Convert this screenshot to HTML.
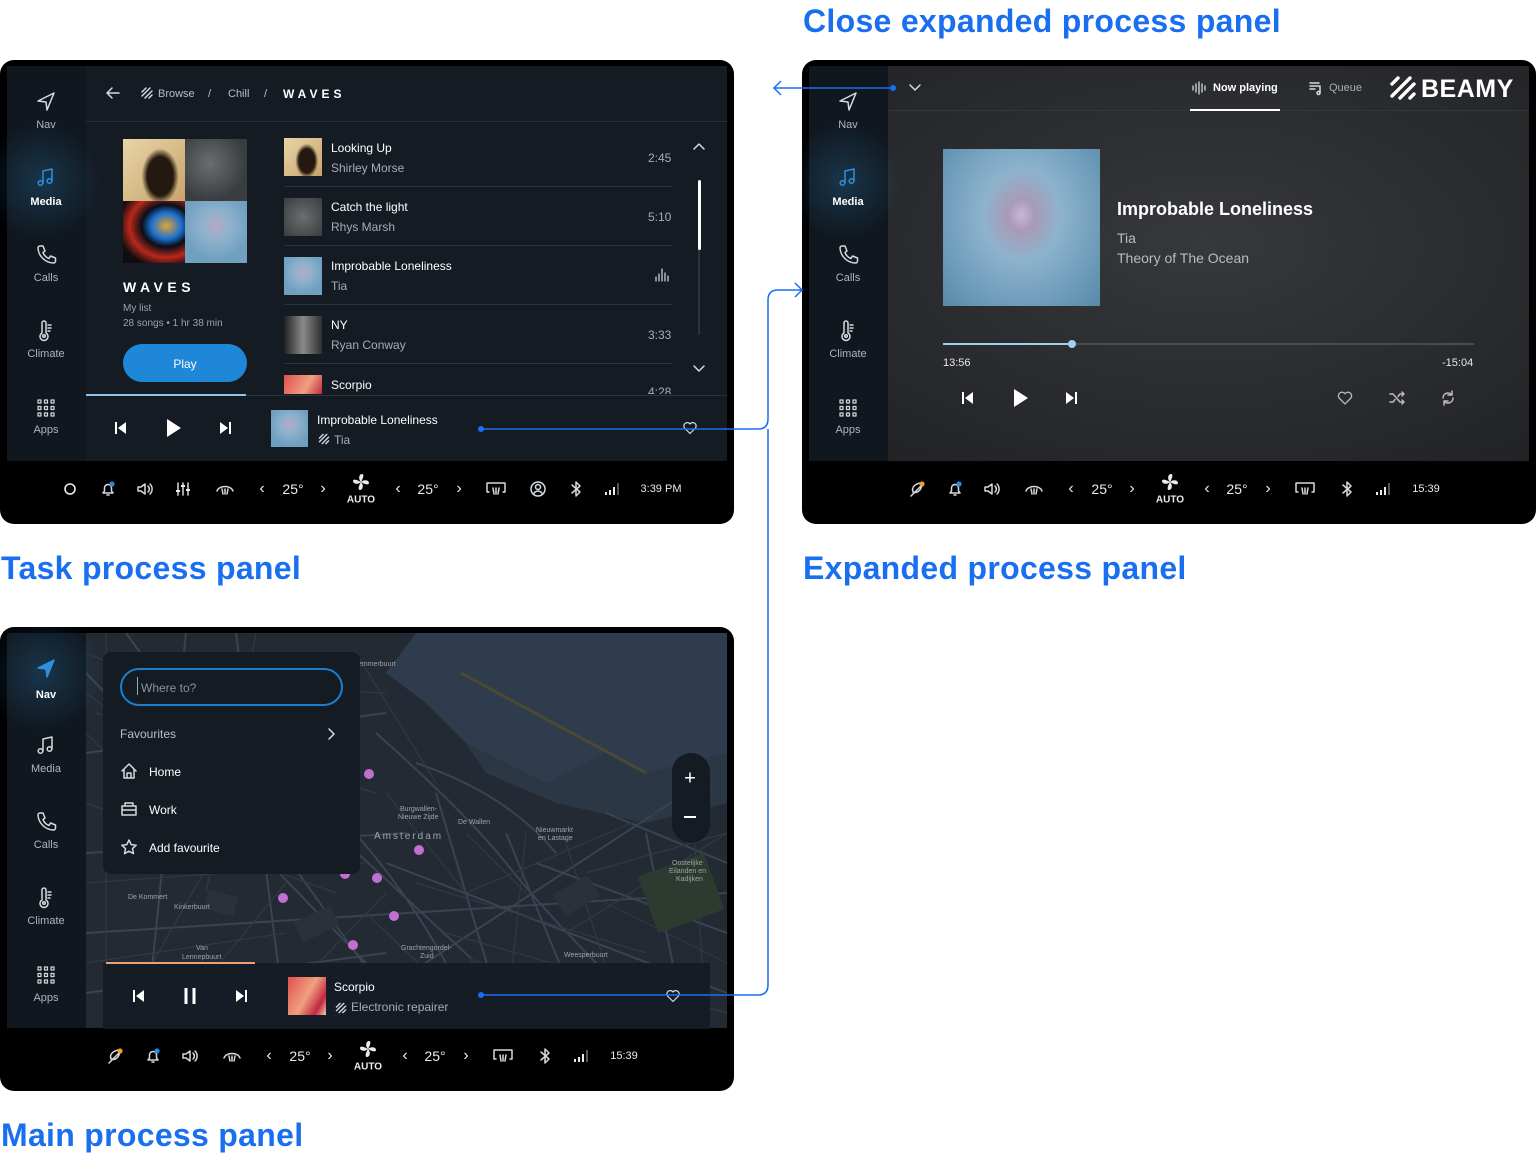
<!DOCTYPE html>
<html><head><meta charset="utf-8">
<style>
*{margin:0;padding:0;box-sizing:border-box}
body{width:1536px;height:1158px;background:#fff;position:relative;overflow:hidden;font-family:"Liberation Sans",sans-serif}
.a{position:absolute}
.c{position:absolute;transform:translate(-50%,-50%);white-space:nowrap}
.t{position:absolute;white-space:nowrap;margin-top:1px}
.title{position:absolute;color:#1a6ff0;font-weight:bold;font-size:32px;white-space:nowrap;letter-spacing:0.3px}
.p{position:absolute;width:734px;height:464px;background:#000;border-radius:14px;overflow:hidden}
.sb{position:absolute;left:7px;top:6px;width:79px;height:395px;background:#10171e}
.lab{position:absolute;left:46px;transform:translate(-50%,-50%);font-size:11px;color:#aeb5bd;white-space:nowrap;margin-top:1px}
.act{color:#fff;font-weight:bold}
.glow{position:absolute;left:-30px;width:130px;height:130px;border-radius:50%;background:radial-gradient(circle,rgba(40,110,160,.35),rgba(40,110,160,0) 65%)}
svg{overflow:visible}
.s{fill:none;stroke:#d5dade;stroke-width:1.5;stroke-linecap:round;stroke-linejoin:round}
.bb{color:#e8ecef;font-size:14px}
</style></head><body>

<div class="title" style="left:803px;top:3px">Close expanded process panel</div>
<div class="title" style="left:1px;top:550px">Task process panel</div>
<div class="title" style="left:803px;top:550px">Expanded process panel</div>
<div class="title" style="left:1px;top:1117px">Main process panel</div>

<!-- ================= PANEL 1 ================= -->
<div class="p" style="left:0;top:60px">
 <div class="a" style="left:7px;top:6px;width:720px;height:395px;background:#141b23"></div>
 <div class="sb">
  <div class="glow" style="top:50px"></div>
 </div>
 <svg class="c" style="left:46px;top:42px" width="22" height="22" viewBox="0 0 22 22"><path class="s" d="M19 2 L3 10 L11 11 L12 19 Z"/></svg>
 <div class="lab" style="top:64px">Nav</div>
 <svg class="c" style="left:46px;top:117px" width="22" height="22" viewBox="0 0 22 22"><path class="s" style="stroke:#2e8fe0" d="M8 17V5l9-2v12"/><circle class="s" style="stroke:#2e8fe0" cx="5.5" cy="17" r="2.3"/><circle class="s" style="stroke:#2e8fe0" cx="14.5" cy="15" r="2.3"/></svg>
 <div class="lab act" style="top:141px">Media</div>
 <svg class="c" style="left:46px;top:195px" width="22" height="22" viewBox="0 0 22 22"><path class="s" d="M5 2h3l2 5-2 1.5a10 10 0 0 0 6 6L15.5 12l5 2v3a2 2 0 0 1-2 2A16 16 0 0 1 3 4a2 2 0 0 1 2-2z"/></svg>
 <div class="lab" style="top:217px">Calls</div>
 <svg class="c" style="left:46px;top:271px" width="22" height="22" viewBox="0 0 22 22"><path class="s" d="M7 3a2 2 0 0 1 4 0v10a4 4 0 1 1-4 0z M13 5h3 M13 8h3 M13 11h2"/><circle class="s" cx="9" cy="16" r="1.3"/></svg>
 <div class="lab" style="top:293px">Climate</div>
 <svg class="c" style="left:46px;top:348px" width="18" height="18" viewBox="0 0 18 18"><g class="s" style="stroke-width:1.2"><rect x="1" y="1" width="3" height="3"/><rect x="7.5" y="1" width="3" height="3"/><rect x="14" y="1" width="3" height="3"/><rect x="1" y="7.5" width="3" height="3"/><rect x="7.5" y="7.5" width="3" height="3"/><rect x="14" y="7.5" width="3" height="3"/><rect x="1" y="14" width="3" height="3"/><rect x="7.5" y="14" width="3" height="3"/><rect x="14" y="14" width="3" height="3"/></g></svg>
 <div class="lab" style="top:369px">Apps</div>

 <svg class="c" style="left:113px;top:33px" width="14" height="12" viewBox="0 0 14 12"><path class="s" d="M13 6H1M6 1L1 6l5 5"/></svg>
 <svg class="c" style="left:147px;top:33px" width="12" height="12" viewBox="0 0 12 12"><path class="s" d="M5 1L1 5M9 1L1 9M11 4L4 11M11 8L8 11"/></svg>
 <div class="t" style="left:158px;top:27px;font-size:11px;color:#b8bfc6">Browse</div>
 <div class="t" style="left:208px;top:27px;font-size:11px;color:#b8bfc6">/</div>
 <div class="t" style="left:228px;top:27px;font-size:11px;color:#b8bfc6">Chill</div>
 <div class="t" style="left:264px;top:27px;font-size:11px;color:#b8bfc6">/</div>
 <div class="t" style="left:283px;top:26px;font-size:12px;color:#fff;font-weight:bold;letter-spacing:4px">WAVES</div>
 <div class="a" style="left:86px;top:61px;width:641px;height:1px;background:#26303a"></div>

 <div class="a" style="left:123px;top:79px;width:62px;height:62px;background:radial-gradient(ellipse 30% 45% at 60% 60%,#241810 0,#241810 70%,transparent 100%),linear-gradient(135deg,#e8d4a8,#c8a46c)"></div>
 <div class="a" style="left:185px;top:79px;width:62px;height:62px;background:radial-gradient(circle at 40% 40%,#6a6e70,#3a3d40 70%)"></div>
 <div class="a" style="left:123px;top:141px;width:62px;height:62px;background:radial-gradient(ellipse at 70% 40%,#e3a530 0,#1a6fd0 25%,#0a0e16 40%,#b8281c 60%,#100c10 80%)"></div>
 <div class="a" style="left:185px;top:141px;width:62px;height:62px;background:radial-gradient(circle at 50% 40%,#b8a8c8 0,#8eb2cc 30%,#6fa0c0 70%)"></div>
 <div class="t" style="left:123px;top:218px;font-size:14px;color:#fff;font-weight:bold;letter-spacing:4.5px">WAVES</div>
 <div class="t" style="left:123px;top:242px;font-size:10px;color:#9aa2aa">My list</div>
 <div class="t" style="left:123px;top:257px;font-size:10px;color:#9aa2aa">28 songs • 1 hr 38 min</div>
 <div class="a" style="left:123px;top:284px;width:124px;height:38px;border-radius:19px;background:#1e87d8"></div>
 <div class="c" style="left:185px;top:304px;font-size:12px;color:#fff">Play</div>

 <div class="a" style="left:284px;top:78px;width:38px;height:38px;background:radial-gradient(ellipse 30% 45% at 60% 60%,#241810 0,#241810 70%,transparent 100%),linear-gradient(135deg,#e8d4a8,#c8a46c)"></div>
 <div class="t" style="left:331px;top:80px;font-size:12px;color:#fff">Looking Up</div>
 <div class="t" style="left:331px;top:100px;font-size:12px;color:#a6adb4">Shirley Morse</div>
 <div class="t" style="left:648px;top:90px;font-size:12px;color:#a6adb4">2:45</div>
 <div class="a" style="left:284px;top:126px;width:388px;height:1px;background:#2a333d"></div>
 <div class="a" style="left:284px;top:138px;width:38px;height:38px;background:radial-gradient(circle,#6a6e70,#3a3d40)"></div>
 <div class="t" style="left:331px;top:139px;font-size:12px;color:#fff">Catch the light</div>
 <div class="t" style="left:331px;top:159px;font-size:12px;color:#a6adb4">Rhys Marsh</div>
 <div class="t" style="left:648px;top:149px;font-size:12px;color:#a6adb4">5:10</div>
 <div class="a" style="left:284px;top:185px;width:388px;height:1px;background:#2a333d"></div>
 <div class="a" style="left:284px;top:197px;width:38px;height:38px;background:radial-gradient(circle at 50% 40%,#b8a8c8 0,#8eb2cc 30%,#6fa0c0 70%)"></div>
 <div class="t" style="left:331px;top:198px;font-size:12px;color:#fff">Improbable Loneliness</div>
 <div class="t" style="left:331px;top:218px;font-size:12px;color:#a6adb4">Tia</div>
 <svg class="c" style="left:662px;top:215px" width="14" height="14" viewBox="0 0 14 14"><path class="s" style="stroke-width:1.2" d="M1 13V9M4 13V6M7 13V1M10 13V5M13 13V8"/></svg>
 <div class="a" style="left:284px;top:244px;width:388px;height:1px;background:#2a333d"></div>
 <div class="a" style="left:284px;top:256px;width:38px;height:38px;background:linear-gradient(90deg,#202020,#8a8a8a 50%,#303030)"></div>
 <div class="t" style="left:331px;top:257px;font-size:12px;color:#fff">NY</div>
 <div class="t" style="left:331px;top:277px;font-size:12px;color:#a6adb4">Ryan Conway</div>
 <div class="t" style="left:648px;top:267px;font-size:12px;color:#a6adb4">3:33</div>
 <div class="a" style="left:284px;top:303px;width:388px;height:1px;background:#2a333d"></div>
 <div class="a" style="left:284px;top:315px;width:38px;height:19px;background:linear-gradient(120deg,#e05050,#f0a080 60%,#c02840)"></div>
 <div class="t" style="left:331px;top:317px;font-size:12px;color:#fff">Scorpio</div>
 <div class="a" style="left:640px;top:323px;width:40px;height:11px;overflow:hidden"><div class="t" style="left:8px;top:2px;font-size:12px;color:#a6adb4;margin:0">4:28</div></div>
 <svg class="c" style="left:699px;top:86px" width="12" height="8" viewBox="0 0 12 8"><path class="s" d="M1 7l5-5 5 5"/></svg>
 <svg class="c" style="left:699px;top:309px" width="12" height="8" viewBox="0 0 12 8"><path class="s" d="M1 1l5 5 5-5"/></svg>
 <div class="a" style="left:698px;top:180px;width:2px;height:95px;background:#2a333d"></div>
 <div class="a" style="left:698px;top:120px;width:3px;height:70px;background:#fff;border-radius:2px"></div>

 <div class="a" style="left:86px;top:335px;width:641px;height:66px;background:#141b23;border-top:1px solid #2a333d"></div>
 <div class="a" style="left:86px;top:334px;width:160px;height:2px;background:#8cc4ee"></div>
 <svg class="c" style="left:121px;top:368px" width="12" height="14" viewBox="0 0 12 14"><path d="M1 1v12" stroke="#fff" stroke-width="2"/><path d="M11 1L3 7l8 6z" fill="#fff"/></svg>
 <svg class="c" style="left:174px;top:368px" width="16" height="20" viewBox="0 0 16 20"><path d="M1 1l14 9-14 9z" fill="#fff"/></svg>
 <svg class="c" style="left:225px;top:368px" width="12" height="14" viewBox="0 0 12 14"><path d="M11 1v12" stroke="#fff" stroke-width="2"/><path d="M1 1l8 6-8 6z" fill="#fff"/></svg>
 <div class="a" style="left:271px;top:350px;width:37px;height:37px;background:radial-gradient(circle at 50% 40%,#b8a8c8 0,#8eb2cc 30%,#6fa0c0 70%)"></div>
 <div class="t" style="left:317px;top:352px;font-size:12px;color:#fff">Improbable Loneliness</div>
 <svg class="c" style="left:324px;top:379px" width="11" height="11" viewBox="0 0 12 12"><path class="s" d="M5 1L1 5M9 1L1 9M11 4L4 11M11 8L8 11"/></svg>
 <div class="t" style="left:334px;top:372px;font-size:12px;color:#a6adb4">Tia</div>
 <svg class="c" style="left:690px;top:368px" width="14" height="13" viewBox="0 0 14 13"><path class="s" style="stroke-width:1.2" d="M7 12L1.5 6.5A3 3 0 0 1 7 2.5a3 3 0 0 1 5.5 4z"/></svg>

 <div class="bb">
  <svg class="c" style="left:70px;top:429px" width="12" height="12"><circle cx="6" cy="6" r="5" fill="none" stroke="#e8ecef" stroke-width="1.6"/></svg>
  <svg class="c" style="left:108px;top:429px" width="16" height="16" viewBox="0 0 16 16"><path class="s" d="M3 12h10l-1.5-2V7a3.5 3.5 0 0 0-7 0v3zM7 14h2"/><circle cx="12" cy="3" r="2.6" fill="#2a8ae0"/></svg>
  <svg class="c" style="left:145px;top:429px" width="16" height="14" viewBox="0 0 16 14"><path class="s" d="M1 5h3l4-3v10l-4-3H1zM11 4a4 4 0 0 1 0 6M13 2a7 7 0 0 1 0 10"/></svg>
  <svg class="c" style="left:183px;top:429px" width="14" height="14" viewBox="0 0 14 14"><path class="s" d="M2 1v12M7 1v12M12 1v12"/><path d="M0 9h4M5 4h4M10 8h4" stroke="#e8ecef" stroke-width="2"/></svg>
  <svg class="c" style="left:225px;top:429px" width="20" height="14" viewBox="0 0 20 14"><path class="s" d="M2 9C4 3 16 3 18 9M7 7l1 5M10 7v5M13 7l-1 5"/></svg>
  <div class="c" style="left:262px;top:429px;font-size:16px">‹</div>
  <div class="c" style="left:293px;top:429px">25°</div>
  <div class="c" style="left:323px;top:429px;font-size:16px">›</div>
  <svg class="c" style="left:361px;top:422px" width="18" height="18" viewBox="0 0 18 18"><path d="M9 9C6 6 7 1 10 1c2 0 2 3 -1 8zM9 9c3-3 8-2 8 1 0 2-3 2-8-1zM9 9c3 3 2 8-1 8-2 0-2-3 1-8zM9 9C6 12 1 11 1 8c0-2 3-2 8 1z" fill="#e8ecef"/></svg>
  <div class="c" style="left:361px;top:440px;font-size:10px;font-weight:bold">AUTO</div>
  <div class="c" style="left:398px;top:429px;font-size:16px">‹</div>
  <div class="c" style="left:428px;top:429px">25°</div>
  <div class="c" style="left:459px;top:429px;font-size:16px">›</div>
  <svg class="c" style="left:496px;top:429px" width="20" height="14" viewBox="0 0 20 14"><path class="s" d="M3 10H1V1h18v9h-2M7 6l1 6M10 6v6M13 6l-1 6"/></svg>
  <svg class="c" style="left:538px;top:429px" width="16" height="16" viewBox="0 0 16 16"><circle class="s" cx="8" cy="8" r="7"/><circle class="s" cx="8" cy="6" r="2.5"/><path class="s" d="M3.5 13a5 5 0 0 1 9 0"/></svg>
  <svg class="c" style="left:576px;top:429px" width="10" height="16" viewBox="0 0 10 16"><path class="s" d="M1 4l8 7-4 4V1l4 4-8 7"/></svg>
  <svg class="c" style="left:612px;top:429px" width="16" height="14" viewBox="0 0 16 14"><path d="M2 13v-3M6 13V8M10 13V5" stroke="#e8ecef" stroke-width="2"/><path d="M14 13V1" stroke="#555" stroke-width="2"/></svg>
  <div class="c" style="left:661px;top:429px;font-size:11px">3:39 PM</div>
 </div>
</div>

<!-- ================= PANEL 2 ================= -->
<div class="p" style="left:802px;top:60px">
 <div class="a" style="left:7px;top:6px;width:720px;height:395px;background:radial-gradient(ellipse at 55% 45%,#36383b 0,#2a2c2f 50%,#1f2124 100%)"></div>
 <div class="sb"><div class="glow" style="top:50px"></div></div>
 <svg class="c" style="left:46px;top:42px" width="22" height="22" viewBox="0 0 22 22"><path class="s" d="M19 2 L3 10 L11 11 L12 19 Z"/></svg>
 <div class="lab" style="top:64px">Nav</div>
 <svg class="c" style="left:46px;top:117px" width="22" height="22" viewBox="0 0 22 22"><path class="s" style="stroke:#2e8fe0" d="M8 17V5l9-2v12"/><circle class="s" style="stroke:#2e8fe0" cx="5.5" cy="17" r="2.3"/><circle class="s" style="stroke:#2e8fe0" cx="14.5" cy="15" r="2.3"/></svg>
 <div class="lab act" style="top:141px">Media</div>
 <svg class="c" style="left:46px;top:195px" width="22" height="22" viewBox="0 0 22 22"><path class="s" d="M5 2h3l2 5-2 1.5a10 10 0 0 0 6 6L15.5 12l5 2v3a2 2 0 0 1-2 2A16 16 0 0 1 3 4a2 2 0 0 1 2-2z"/></svg>
 <div class="lab" style="top:217px">Calls</div>
 <svg class="c" style="left:46px;top:271px" width="22" height="22" viewBox="0 0 22 22"><path class="s" d="M7 3a2 2 0 0 1 4 0v10a4 4 0 1 1-4 0z M13 5h3 M13 8h3 M13 11h2"/><circle class="s" cx="9" cy="16" r="1.3"/></svg>
 <div class="lab" style="top:293px">Climate</div>
 <svg class="c" style="left:46px;top:348px" width="18" height="18" viewBox="0 0 18 18"><g class="s" style="stroke-width:1.2"><rect x="1" y="1" width="3" height="3"/><rect x="7.5" y="1" width="3" height="3"/><rect x="14" y="1" width="3" height="3"/><rect x="1" y="7.5" width="3" height="3"/><rect x="7.5" y="7.5" width="3" height="3"/><rect x="14" y="7.5" width="3" height="3"/><rect x="1" y="14" width="3" height="3"/><rect x="7.5" y="14" width="3" height="3"/><rect x="14" y="14" width="3" height="3"/></g></svg>
 <div class="lab" style="top:369px">Apps</div>

 <svg class="c" style="left:113px;top:28px" width="12" height="8" viewBox="0 0 12 8"><path class="s" d="M1 1l5 5 5-5"/></svg>
 <div class="a" style="left:86px;top:50px;width:641px;height:1px;background:#34373a"></div>
 <svg class="c" style="left:398px;top:28px" width="16" height="14" viewBox="0 0 16 14"><path class="s" style="stroke-width:1.3" d="M1 5v4M4 3v8M7 1v12M10 3v8M13 5v4"/></svg>
 <div class="t" style="left:411px;top:21px;font-size:11px;color:#fff;font-weight:bold">Now playing</div>
 <div class="a" style="left:388px;top:49px;width:90px;height:2px;background:#fff"></div>
 <svg class="c" style="left:514px;top:28px" width="14" height="14" viewBox="0 0 14 14"><path class="s" d="M1 2h9M1 5h9M1 8h5M11 5v7"/><circle class="s" cx="9.5" cy="12" r="1.5"/></svg>
 <div class="t" style="left:527px;top:21px;font-size:11px;color:#a9adb1">Queue</div>
 <svg class="c" style="left:601px;top:29px" width="26" height="26" viewBox="0 0 26 26"><path d="M8 2L2 8M20 2L2 20M24 8L10 22M24 18L20 22" stroke="#fff" stroke-width="3.4" stroke-linecap="round"/></svg>
 <div class="t" style="left:619px;top:14px;font-size:25px;color:#fff;font-weight:bold;letter-spacing:0.5px">BEAMY</div>

 <div class="a" style="left:141px;top:89px;width:157px;height:157px;background:radial-gradient(ellipse at 50% 42%,#c8b8d8 0,#a99ab8 12%,#8db3cc 35%,#6a9ab8 75%,#5a88a8 100%)"></div>
 <div class="t" style="left:315px;top:138px;font-size:18px;color:#fff;font-weight:bold">Improbable Loneliness</div>
 <div class="t" style="left:315px;top:169px;font-size:14px;color:#b9bcbf">Tia</div>
 <div class="t" style="left:315px;top:189px;font-size:14px;color:#b9bcbf">Theory of The Ocean</div>

 <div class="a" style="left:141px;top:283px;width:531px;height:2px;background:#4a4d50"></div>
 <div class="a" style="left:141px;top:283px;width:129px;height:2px;background:#9fd0f0"></div>
 <div class="a" style="left:266px;top:280px;width:8px;height:8px;border-radius:50%;background:#9fd0f0"></div>
 <div class="t" style="left:141px;top:296px;font-size:11px;color:#e8e8e8">13:56</div>
 <div class="t" style="left:640px;top:296px;font-size:11px;color:#e8e8e8">-15:04</div>
 <svg class="c" style="left:166px;top:338px" width="12" height="14" viewBox="0 0 12 14"><path d="M1 1v12" stroke="#fff" stroke-width="2"/><path d="M11 1L3 7l8 6z" fill="#fff"/></svg>
 <svg class="c" style="left:219px;top:338px" width="16" height="20" viewBox="0 0 16 20"><path d="M1 1l14 9-14 9z" fill="#fff"/></svg>
 <svg class="c" style="left:269px;top:338px" width="12" height="14" viewBox="0 0 12 14"><path d="M11 1v12" stroke="#fff" stroke-width="2"/><path d="M1 1l8 6-8 6z" fill="#fff"/></svg>
 <svg class="c" style="left:543px;top:338px" width="16" height="14" viewBox="0 0 14 13"><path class="s" style="stroke:#bbb;stroke-width:1.2" d="M7 12L1.5 6.5A3 3 0 0 1 7 2.5a3 3 0 0 1 5.5 4z"/></svg>
 <svg class="c" style="left:595px;top:338px" width="16" height="14" viewBox="0 0 16 14"><path class="s" style="stroke:#bbb" d="M1 3h3l7 8h4M1 11h3l2-2.5M9 5.5L11 3h4M13 1l2 2-2 2M13 9l2 2-2 2"/></svg>
 <svg class="c" style="left:646px;top:338px" width="16" height="16" viewBox="0 0 16 16"><path class="s" style="stroke:#bbb" d="M3 8a5 5 0 0 1 9-3M13 8a5 5 0 0 1-9 3M12 1v4H8M4 15v-4h4"/></svg>

 <div class="bb">
  <svg class="c" style="left:115px;top:429px" width="16" height="16" viewBox="0 0 16 16"><path class="s" d="M2 15L12 5M4 11c-2-5 3-9 9-9 0 6-4 11-9 9z"/><circle cx="13" cy="3" r="2.6" fill="#f0a020"/></svg>
  <svg class="c" style="left:153px;top:429px" width="16" height="16" viewBox="0 0 16 16"><path class="s" d="M3 12h10l-1.5-2V7a3.5 3.5 0 0 0-7 0v3zM7 14h2"/><circle cx="12" cy="3" r="2.6" fill="#2a8ae0"/></svg>
  <svg class="c" style="left:190px;top:429px" width="16" height="14" viewBox="0 0 16 14"><path class="s" d="M1 5h3l4-3v10l-4-3H1zM11 4a4 4 0 0 1 0 6M13 2a7 7 0 0 1 0 10"/></svg>
  <svg class="c" style="left:232px;top:429px" width="20" height="14" viewBox="0 0 20 14"><path class="s" d="M2 9C4 3 16 3 18 9M7 7l1 5M10 7v5M13 7l-1 5"/></svg>
  <div class="c" style="left:269px;top:429px;font-size:16px">‹</div>
  <div class="c" style="left:300px;top:429px">25°</div>
  <div class="c" style="left:330px;top:429px;font-size:16px">›</div>
  <svg class="c" style="left:368px;top:422px" width="18" height="18" viewBox="0 0 18 18"><path d="M9 9C6 6 7 1 10 1c2 0 2 3 -1 8zM9 9c3-3 8-2 8 1 0 2-3 2-8-1zM9 9c3 3 2 8-1 8-2 0-2-3 1-8zM9 9C6 12 1 11 1 8c0-2 3-2 8 1z" fill="#e8ecef"/></svg>
  <div class="c" style="left:368px;top:440px;font-size:10px;font-weight:bold">AUTO</div>
  <div class="c" style="left:405px;top:429px;font-size:16px">‹</div>
  <div class="c" style="left:435px;top:429px">25°</div>
  <div class="c" style="left:466px;top:429px;font-size:16px">›</div>
  <svg class="c" style="left:503px;top:429px" width="20" height="14" viewBox="0 0 20 14"><path class="s" d="M3 10H1V1h18v9h-2M7 6l1 6M10 6v6M13 6l-1 6"/></svg>
  <svg class="c" style="left:545px;top:429px" width="10" height="16" viewBox="0 0 10 16"><path class="s" d="M1 4l8 7-4 4V1l4 4-8 7"/></svg>
  <svg class="c" style="left:581px;top:429px" width="16" height="14" viewBox="0 0 16 14"><path d="M2 13v-3M6 13V8M10 13V5" stroke="#e8ecef" stroke-width="2"/><path d="M14 13V1" stroke="#555" stroke-width="2"/></svg>
  <div class="c" style="left:624px;top:429px;font-size:11px">15:39</div>
 </div>
</div>

<!-- ================= PANEL 3 ================= -->
<div class="p" style="left:0;top:627px">
 <div class="a" style="left:7px;top:6px;width:720px;height:395px;background:#242a33"></div>
 <svg class="a" style="left:86px;top:6px" width="641" height="395" viewBox="0 0 641 395">
  <path d="M330 0 L641 0 L641 120 L560 140 L520 120 L460 150 L420 130 L380 110 L340 70 L300 40 Z" fill="#2f3c4d"/>
  <path d="M380 110 L460 150 L520 120 L560 140 L641 120 L641 170 L560 190 L470 170 L400 140 Z" fill="#2c3746"/>
  <g stroke="#3a4350" stroke-width="2" fill="none">
   <path d="M0 40 L280 330 M40 0 L320 390 M100 0 L60 395 M0 120 L300 80 M0 220 L320 200 M0 300 L641 260 M150 0 L200 395 M240 395 L600 160 M300 230 L641 360 M420 200 L500 395 M520 180 L641 230 M350 160 L420 395 M450 230 L641 300 M0 360 L300 320 M560 200 L600 395 M250 200 L460 395"/>
   <path d="M290 100 Q380 180 420 230 T520 340 M200 130 Q300 220 360 330 M330 130 Q420 160 470 220"/>
  </g>
  <g stroke="#313944" stroke-width="1.2" fill="none">
   <path d="M20 0 L20 395 M60 50 L300 60 M10 80 L290 160 M0 170 L250 260 M120 260 L170 0 M480 300 L641 200 M380 260 L641 150 M270 20 L350 150 M600 60 L620 395"/>
   <path d="M0 250 L280 230 M30 395 L140 200 M80 395 L200 250 M170 395 L300 260 M0 330 L200 300 M280 280 L400 395 M300 160 L380 260 M440 200 L420 395 M480 210 L540 395 M500 240 L641 200 M520 270 L641 330 M380 200 L440 260 M330 250 L560 320 M360 300 L641 380 M0 20 L100 60 M0 60 L80 120 M0 100 L60 160"/>
  </g>
  <g fill="#2a313b"><rect x="120" y="260" width="30" height="20" transform="rotate(15 135 270)"/><rect x="210" y="280" width="40" height="22" transform="rotate(-25 230 290)"/><rect x="380" y="330" width="35" height="25" transform="rotate(20 397 342)"/><rect x="470" y="250" width="40" height="25" transform="rotate(-30 490 262)"/></g>
  <path d="M375 40 L560 140" stroke="#4a4a30" stroke-width="3"/>
  <rect x="560" y="230" width="70" height="60" fill="#2d3a30" transform="rotate(-20 595 260)"/>
  <g fill="#c070d0"><circle cx="283" cy="141" r="5"/><circle cx="333" cy="217" r="5"/><circle cx="259" cy="241" r="5"/><circle cx="291" cy="245" r="5"/><circle cx="197" cy="265" r="5"/><circle cx="308" cy="283" r="5"/><circle cx="267" cy="312" r="5"/></g>
  <g font-family="Liberation Sans" font-size="7" fill="#9aa4ae"><text x="288" y="206" font-size="10" letter-spacing="2">Amsterdam</text><text x="314" y="178">Burgwallen-</text><text x="312" y="186">Nieuwe Zijde</text><text x="372" y="191">De Wallen</text><text x="450" y="199">Nieuwmarkt</text><text x="452" y="207">en Lastage</text><text x="586" y="232">Oostelijke</text><text x="583" y="240">Eilanden en</text><text x="590" y="248">Kadijken</text><text x="42" y="266">De Kommert</text><text x="88" y="276">Kinkerbuurt</text><text x="315" y="317">Grachtengordel-</text><text x="334" y="325">Zuid</text><text x="478" y="324">Weesperbuurt</text><text x="110" y="317">Van</text><text x="96" y="326">Lennepbuurt</text><text x="272" y="33">emmerbuurt</text></g>
 </svg>
 <div class="sb"><div class="glow" style="top:-25px"></div></div>
 <svg class="c" style="left:46px;top:42px" width="22" height="22" viewBox="0 0 22 22"><path class="s" style="stroke:#2e8fe0;fill:#2e8fe0" d="M19 2 L3 10 L11 11 L12 19 Z"/></svg>
 <div class="lab act" style="top:67px">Nav</div>
 <svg class="c" style="left:46px;top:118px" width="22" height="22" viewBox="0 0 22 22"><path class="s" d="M8 17V5l9-2v12"/><circle class="s" cx="5.5" cy="17" r="2.3"/><circle class="s" cx="14.5" cy="15" r="2.3"/></svg>
 <div class="lab" style="top:141px">Media</div>
 <svg class="c" style="left:46px;top:195px" width="22" height="22" viewBox="0 0 22 22"><path class="s" d="M5 2h3l2 5-2 1.5a10 10 0 0 0 6 6L15.5 12l5 2v3a2 2 0 0 1-2 2A16 16 0 0 1 3 4a2 2 0 0 1 2-2z"/></svg>
 <div class="lab" style="top:217px">Calls</div>
 <svg class="c" style="left:46px;top:271px" width="22" height="22" viewBox="0 0 22 22"><path class="s" d="M7 3a2 2 0 0 1 4 0v10a4 4 0 1 1-4 0z M13 5h3 M13 8h3 M13 11h2"/><circle class="s" cx="9" cy="16" r="1.3"/></svg>
 <div class="lab" style="top:293px">Climate</div>
 <svg class="c" style="left:46px;top:348px" width="18" height="18" viewBox="0 0 18 18"><g class="s" style="stroke-width:1.2"><rect x="1" y="1" width="3" height="3"/><rect x="7.5" y="1" width="3" height="3"/><rect x="14" y="1" width="3" height="3"/><rect x="1" y="7.5" width="3" height="3"/><rect x="7.5" y="7.5" width="3" height="3"/><rect x="14" y="7.5" width="3" height="3"/><rect x="1" y="14" width="3" height="3"/><rect x="7.5" y="14" width="3" height="3"/><rect x="14" y="14" width="3" height="3"/></g></svg>
 <div class="lab" style="top:370px">Apps</div>

 <div class="a" style="left:103px;top:25px;width:257px;height:222px;background:#141b23;border-radius:8px"></div>
 <div class="a" style="left:120px;top:41px;width:223px;height:38px;border:2px solid #1a7fd0;border-radius:19px"></div>
 <div class="a" style="left:137px;top:50px;width:1px;height:18px;background:#9aa"></div>
 <div class="t" style="left:141px;top:53px;font-size:12px;color:#8a929a">Where to?</div>
 <div class="t" style="left:120px;top:99px;font-size:12px;color:#b9bfc5">Favourites</div>
 <svg class="c" style="left:332px;top:107px" width="8" height="12" viewBox="0 0 8 12"><path class="s" d="M1 1l5 5-5 5"/></svg>
 <svg class="c" style="left:129px;top:144px" width="16" height="16" viewBox="0 0 16 16"><path class="s" d="M1 8L8 1l7 7M3 6v9h10V6M6 15v-5h4v5"/></svg>
 <div class="t" style="left:149px;top:137px;font-size:12px;color:#fff">Home</div>
 <svg class="c" style="left:129px;top:182px" width="16" height="14" viewBox="0 0 16 14"><path class="s" d="M1 4h14v9H1zM4 4V1h8v3M1 8h14"/></svg>
 <div class="t" style="left:149px;top:175px;font-size:12px;color:#fff">Work</div>
 <svg class="c" style="left:129px;top:220px" width="16" height="16" viewBox="0 0 16 16"><path class="s" d="M8 1l2.2 4.6 5 .6-3.7 3.4 1 5L8 12.2 3.5 14.6l1-5L.8 6.2l5-.6z"/></svg>
 <div class="t" style="left:149px;top:213px;font-size:12px;color:#fff">Add favourite</div>

 <div class="a" style="left:672px;top:126px;width:38px;height:90px;border-radius:19px;background:#141b23"></div>
 <div class="c" style="left:690px;top:152px;color:#fff;font-size:20px">+</div>
 <div class="a" style="left:684px;top:189px;width:12px;height:1.5px;background:#fff"></div>

 <div class="a" style="left:103px;top:336px;width:607px;height:66px;background:#151c25"></div>
 <div class="a" style="left:106px;top:335px;width:149px;height:2px;background:#f0a070"></div>
 <svg class="c" style="left:139px;top:369px" width="12" height="14" viewBox="0 0 12 14"><path d="M1 1v12" stroke="#fff" stroke-width="2"/><path d="M11 1L3 7l8 6z" fill="#fff"/></svg>
 <svg class="c" style="left:190px;top:369px" width="12" height="18" viewBox="0 0 12 18"><path d="M2 1v16M10 1v16" stroke="#fff" stroke-width="3"/></svg>
 <svg class="c" style="left:241px;top:369px" width="12" height="14" viewBox="0 0 12 14"><path d="M11 1v12" stroke="#fff" stroke-width="2"/><path d="M1 1l8 6-8 6z" fill="#fff"/></svg>
 <div class="a" style="left:288px;top:350px;width:38px;height:38px;background:linear-gradient(120deg,#e05050,#f0a080 50%,#c02840 80%,#f0d0a0)"></div>
 <div class="t" style="left:334px;top:352px;font-size:12px;color:#fff">Scorpio</div>
 <svg class="c" style="left:341px;top:381px" width="11" height="11" viewBox="0 0 12 12"><path class="s" d="M5 1L1 5M9 1L1 9M11 4L4 11M11 8L8 11"/></svg>
 <div class="t" style="left:351px;top:372px;font-size:12px;color:#a6adb4">Electronic repairer</div>
 <svg class="c" style="left:673px;top:369px" width="14" height="13" viewBox="0 0 14 13"><path class="s" style="stroke-width:1.2" d="M7 12L1.5 6.5A3 3 0 0 1 7 2.5a3 3 0 0 1 5.5 4z"/></svg>

 <div class="bb">
  <svg class="c" style="left:115px;top:429px" width="16" height="16" viewBox="0 0 16 16"><path class="s" d="M2 15L12 5M4 11c-2-5 3-9 9-9 0 6-4 11-9 9z"/><circle cx="13" cy="3" r="2.6" fill="#f0a020"/></svg>
  <svg class="c" style="left:153px;top:429px" width="16" height="16" viewBox="0 0 16 16"><path class="s" d="M3 12h10l-1.5-2V7a3.5 3.5 0 0 0-7 0v3zM7 14h2"/><circle cx="12" cy="3" r="2.6" fill="#2a8ae0"/></svg>
  <svg class="c" style="left:190px;top:429px" width="16" height="14" viewBox="0 0 16 14"><path class="s" d="M1 5h3l4-3v10l-4-3H1zM11 4a4 4 0 0 1 0 6M13 2a7 7 0 0 1 0 10"/></svg>
  <svg class="c" style="left:232px;top:429px" width="20" height="14" viewBox="0 0 20 14"><path class="s" d="M2 9C4 3 16 3 18 9M7 7l1 5M10 7v5M13 7l-1 5"/></svg>
  <div class="c" style="left:269px;top:429px;font-size:16px">‹</div>
  <div class="c" style="left:300px;top:429px">25°</div>
  <div class="c" style="left:330px;top:429px;font-size:16px">›</div>
  <svg class="c" style="left:368px;top:422px" width="18" height="18" viewBox="0 0 18 18"><path d="M9 9C6 6 7 1 10 1c2 0 2 3 -1 8zM9 9c3-3 8-2 8 1 0 2-3 2-8-1zM9 9c3 3 2 8-1 8-2 0-2-3 1-8zM9 9C6 12 1 11 1 8c0-2 3-2 8 1z" fill="#e8ecef"/></svg>
  <div class="c" style="left:368px;top:440px;font-size:10px;font-weight:bold">AUTO</div>
  <div class="c" style="left:405px;top:429px;font-size:16px">‹</div>
  <div class="c" style="left:435px;top:429px">25°</div>
  <div class="c" style="left:466px;top:429px;font-size:16px">›</div>
  <svg class="c" style="left:503px;top:429px" width="20" height="14" viewBox="0 0 20 14"><path class="s" d="M3 10H1V1h18v9h-2M7 6l1 6M10 6v6M13 6l-1 6"/></svg>
  <svg class="c" style="left:545px;top:429px" width="10" height="16" viewBox="0 0 10 16"><path class="s" d="M1 4l8 7-4 4V1l4 4-8 7"/></svg>
  <svg class="c" style="left:581px;top:429px" width="16" height="14" viewBox="0 0 16 14"><path d="M2 13v-3M6 13V8M10 13V5" stroke="#e8ecef" stroke-width="2"/><path d="M14 13V1" stroke="#555" stroke-width="2"/></svg>
  <div class="c" style="left:624px;top:429px;font-size:11px">15:39</div>
 </div>
</div>

<svg class="a" style="left:0;top:0" width="1536" height="1158">
 <g fill="none" stroke="#1a6ff0" stroke-width="1.5">
  <path d="M893 88 H774 M781 81 L774 88 L781 95"/>
  <path d="M481 429 H758 Q768 429 768 419 V300 Q768 290 778 290 H802 M795 283 L802 290 L795 297"/>
  <path d="M481 995 H758 Q768 995 768 985 V429"/>
 </g>
 <g fill="#1a6ff0"><circle cx="893" cy="88" r="3"/><circle cx="481" cy="429" r="3"/><circle cx="481" cy="995" r="3"/></g>
</svg>
</body></html>
